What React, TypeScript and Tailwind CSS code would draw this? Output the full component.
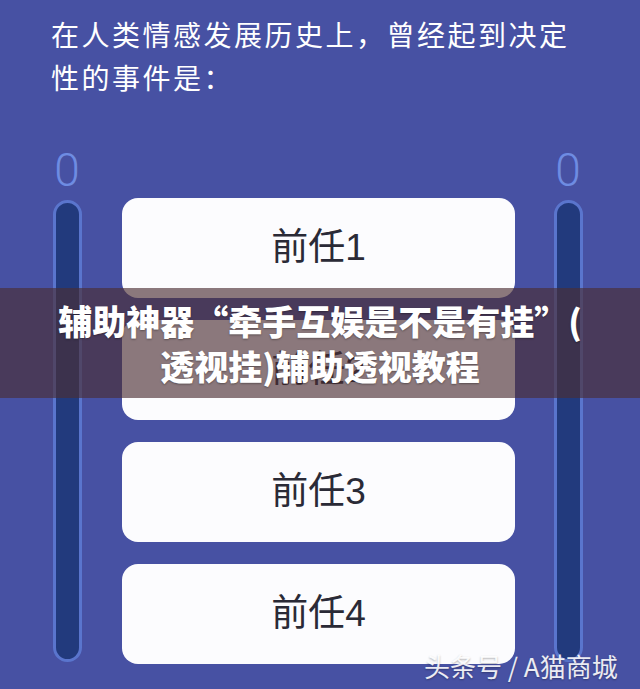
import React from "react";

const cjk = { fontFamily: '"Noto Sans CJK SC", "Noto Sans", sans-serif' };
const btnFont = { fontFamily: '"Liberation Sans", "Noto Sans CJK SC", sans-serif' };

function Bar() {
  return (
    <div className="flex w-[30px] flex-col items-center">
      <div className="h-[30px] text-[46px] leading-[30px] font-light text-[#6e8ce2]" style={{ fontFamily: 'Roboto, "Liberation Sans", sans-serif' }}>
        0
      </div>
      <div className="mt-[15px] h-[462px] w-[29px] rounded-full border-[3px] border-[#5a75cd] bg-[#223a7d]" />
    </div>
  );
}

export default function App() {
  const options = ["前任1", "前任2", "前任3", "前任4"];
  return (
    <div className="relative h-[689px] w-[640px] overflow-hidden bg-[#4751a3]">
      <p className="pl-[51px] pt-[13px] text-[28px] leading-[43px] tracking-[2.5px] text-white" style={cjk}>
        在人类情感发展历史上，曾经起到决定
        <br />
        性的事件是：
      </p>

      <div className="mt-[56px] flex items-start pl-[52px]">
        <Bar />
        <div className="ml-[40px] flex w-[393px] flex-col gap-[22px] pt-[43px]">
          {options.map((o) => (
            <div
              key={o}
              className="flex h-[100px] items-center justify-center rounded-[16px] bg-[#fcfcfe] text-[37px] text-[#2a2a36]"
              style={btnFont}
            >
              {o}
            </div>
          ))}
        </div>
        <div className="ml-[38px]">
          <Bar />
        </div>
      </div>

      <div className="absolute left-0 top-[288px] flex h-[110px] w-full flex-col items-center justify-center bg-[rgba(75,45,50,0.64)]">
        <div
          className="text-center text-[34px] font-black leading-[45px] text-white [text-shadow:0_1px_2px_rgba(0,0,0,0.35)]"
          style={cjk}
        >
          辅助神器“牵手互娱是不是有挂”(
          <br />
          透视挂)辅助透视教程
        </div>
      </div>

      <div
        className="absolute left-[424px] top-[651px] text-[26px] leading-[30px] text-white/90 [text-shadow:0_1px_2px_rgba(0,0,0,0.3)]"
        style={cjk}
      >
        头条号 / A猫商城
      </div>
    </div>
  );
}
